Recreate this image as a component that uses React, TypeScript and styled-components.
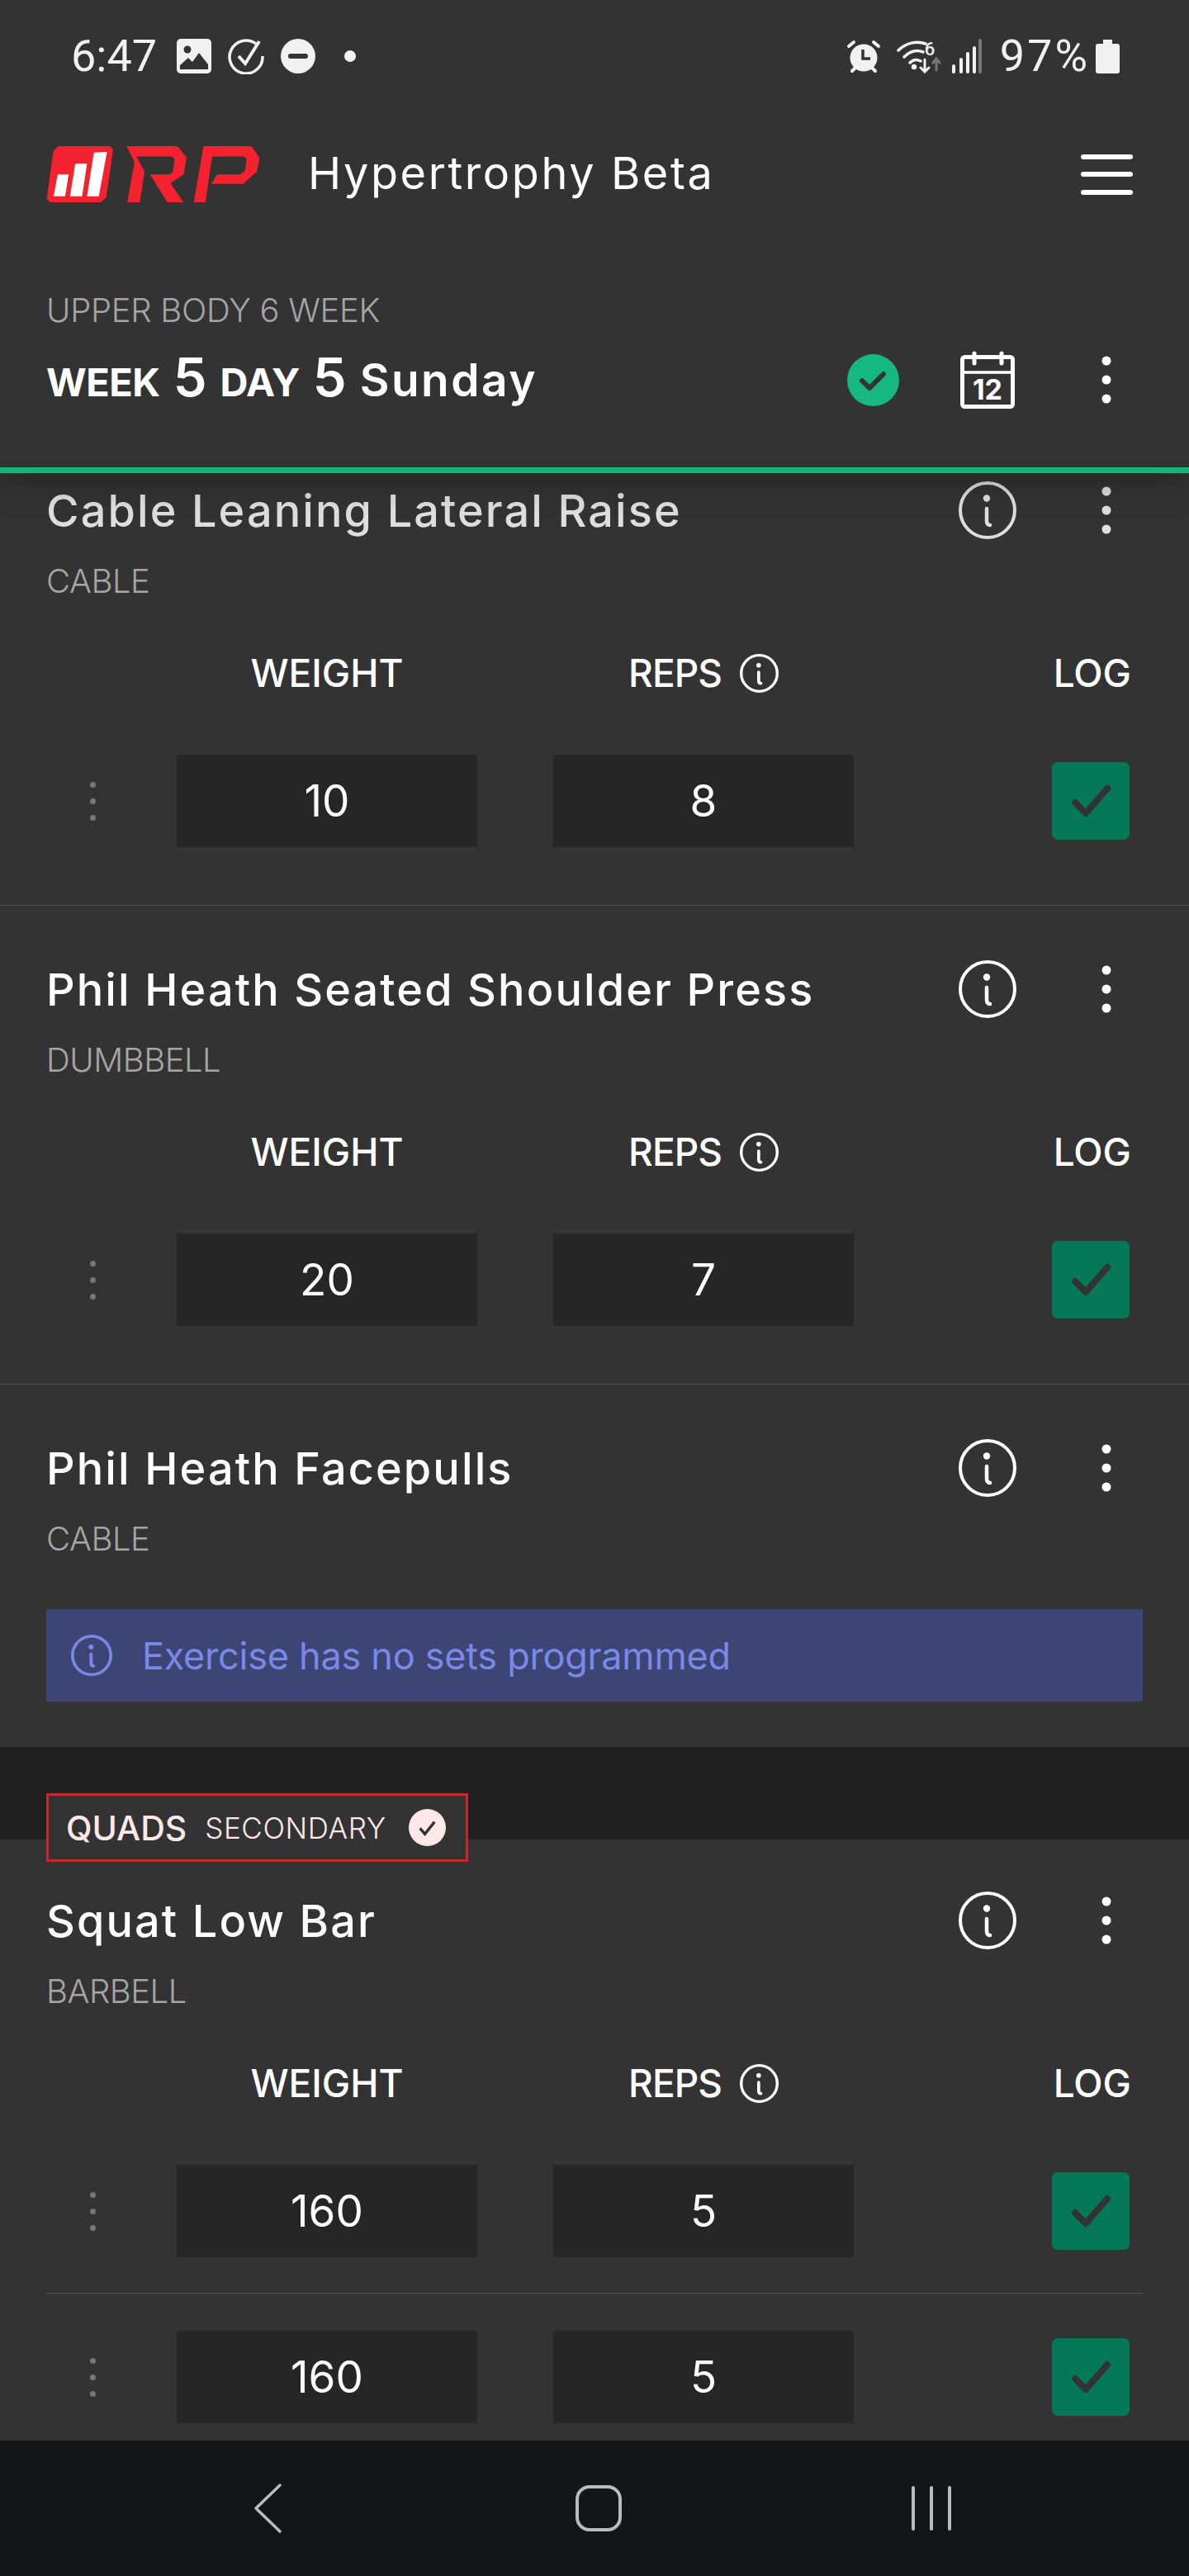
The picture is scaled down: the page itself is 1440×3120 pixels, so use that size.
import React from 'react'
import styled, {createGlobalStyle} from 'styled-components'

const FONT = `Inter, "Liberation Sans", sans-serif`

const Global = createGlobalStyle`
  html, body {
    margin: 0;
    padding: 0;
    background: #333;
  }
  * {
    box-sizing: border-box;
  }
`

const Screen = styled.div`
  width: 1440px;
  height: 3120px;
  display: flex;
  flex-direction: column;
  overflow: hidden;
  background: #333;
  color: #fff;
  font-family: ${FONT};
`

const Top = styled.header`
  position: relative;
  z-index: 2;
  height: 573px;
  flex: none;
  background: #333;
  border-bottom: 7px solid #18b27d;
  box-shadow: 0 10px 40px rgba(0, 0, 0, 0.3);
`

const StatusBar = styled.div`
  height: 136px;
  padding: 0 84px 0 86px;
  display: flex;
  align-items: center;
  justify-content: space-between;
  color: #f1f1f1;
  font-family: Roboto, sans-serif;
`

const StatusGroup = styled.div`
  display: flex;
  align-items: center;
`

const StatusSlot = styled.div<{$left: number}>`
  display: flex;
  margin-left: ${(p) => p.$left}px;
`

const StatusText = styled.span<{$spread?: number}>`
  font-size: 54px;
  line-height: 54px;
  letter-spacing: ${(p) => p.$spread ?? 0}px;
`

const AppBar = styled.div`
  height: 150px;
  padding: 0 68px 0 56px;
  display: flex;
  align-items: center;
`

const AppTitle = styled.div`
  flex: 1;
  margin: -4px 0 0 58px;
  font-size: 54px;
  letter-spacing: 2.600px;
  font-weight: 400;
`

const Burger = styled.div`
  width: 63px;
  display: flex;
  flex-direction: column;
  gap: 15.500px;
`

const BurgerLine = styled.span`
  height: 6px;
  border-radius: 3px;
  background: #fff;
`

const Program = styled.div`
  margin: 66px 56px 0;
  font-size: 40px;
  line-height: 48px;
  letter-spacing: -0.300px;
  color: #a5a5a5;
  font-weight: 300;
`

const DayBar = styled.div`
  margin-top: 25px;
  height: 70px;
  padding: 0 93px 0 56px;
  display: flex;
  align-items: center;
`

const DayTitle = styled.div`
  flex: 1;
  display: flex;
  align-items: baseline;
  gap: 16px;
  font-size: 55px;
  line-height: 70px;
  font-weight: 600;
  letter-spacing: 2.500px;
`

const DaySmall = styled.span`
  font-size: 47px;
  font-weight: 700;
  letter-spacing: -0.500px;
`

const DayNumber = styled.span`
  font-size: 65px;
  font-weight: 600;
  letter-spacing: 0;
`

const Spacer = styled.div<{$w: number}>`
  width: ${(p) => p.$w}px;
  flex: none;
`

const Scroll = styled.main`
  flex: 1;
  min-height: 0;
  overflow: hidden;
`

const Card = styled.section<{$first?: boolean; $last?: boolean}>`
  padding: ${(p) => (p.$first ? 10 : 66)}px 56px 0;
  border-bottom: ${(p) => (p.$last ? 'none' : '1px solid #4e4e4e')};
`

const TitleRow = styled.div`
  height: 70px;
  display: flex;
  align-items: center;
`

const ExerciseName = styled.h2<{$dim?: boolean}>`
  flex: 1;
  margin: 0;
  font-size: 54px;
  font-weight: 500;
  letter-spacing: 2.100px;
  color: ${(p) => (p.$dim ? '#dedede' : '#fff')};
`

const IconSlot = styled.div<{$w: number}>`
  width: ${(p) => p.$w}px;
  display: flex;
  justify-content: center;
  flex: none;
`

const Equipment = styled.div`
  margin-top: 31px;
  font-size: 40px;
  line-height: 40px;
  letter-spacing: -0.500px;
  font-weight: 300;
  color: #a5a5a5;
`

const SetGrid = styled.div`
  display: grid;
  grid-template-columns: 158px 364px 92px 364px 1fr;
  align-items: center;
`

const HeadRow = styled(SetGrid)`
  height: 48px;
  margin-top: 63px;
  font-size: 46px;
  font-weight: 500;
`

const Head = styled.div<{$col: number}>`
  grid-column: ${(p) => p.$col};
  display: flex;
  justify-content: center;
  align-items: center;
  gap: 22px;
  &:last-child {
    justify-content: flex-end;
    padding-right: 14px;
  }
`

const RepsLabel = styled.span`
  letter-spacing: -1px;
`

const SetRow = styled(SetGrid)<{$next?: boolean; $last?: boolean}>`
  padding-top: ${(p) => (p.$next ? 45 : 79)}px;
  padding-bottom: ${(p) => (p.$last ? 70 : 43)}px;
  border-top: ${(p) => (p.$next ? '1px solid #4e4e4e' : 'none')};
`

const Grip = styled.div`
  display: flex;
  flex-direction: column;
  align-items: center;
  gap: 13px;
  width: 112px;
`

const GripDot = styled.span`
  width: 7px;
  height: 7px;
  border-radius: 50%;
  background: #777;
`

const NumberBox = styled.div<{$col: number}>`
  grid-column: ${(p) => p.$col};
  height: 112px;
  display: flex;
  align-items: center;
  justify-content: center;
  background: #262626;
  font-size: 53px;
  font-weight: 400;
`

const LogBox = styled.div`
  grid-column: 5;
  justify-self: end;
  margin-right: 16px;
  width: 94px;
  height: 94px;
  border-radius: 7px;
  background: #047857;
  display: flex;
  align-items: center;
  justify-content: center;
`

const Alert = styled.div`
  margin: 65px 0 55px;
  height: 112px;
  padding: 0 30px;
  display: flex;
  align-items: center;
  gap: 36px;
  background: #3d4574;
  color: #7a88e8;
  font-size: 45px;
  font-weight: 400;
  letter-spacing: -0.250px;
`

const GroupBand = styled.div`
  height: 112px;
  padding-top: 56px;
  background: #212121;
`

const MuscleChip = styled.div`
  position: relative;
  z-index: 1;
  margin-left: 56px;
  width: 511px;
  height: 83px;
  border: 3px solid #c6282c;
  background: #333;
  display: flex;
  align-items: center;
  padding-left: 21px;
  color: #fde8e8;
`

const ChipMain = styled.span`
  font-size: 41px;
  font-weight: 500;
  margin-right: 22px;
`

const ChipSub = styled.span`
  font-size: 35px;
  font-weight: 300;
  letter-spacing: 0.600px;
  margin-right: 27px;
`

const LastCard = styled.section`
  padding: 63px 56px 0;
`

const NavBar = styled.nav`
  height: 164px;
  flex: none;
  background: #131519;
  padding-left: 307px;
  display: flex;
  align-items: center;
`

const NavItem = styled.div<{$left: number}>`
  display: flex;
  margin-left: ${(p) => p.$left}px;
`

function Info({size = 70, color = '#fff', stroke = 4}: {size?: number; color?: string; stroke?: number}) {
  return (
    <svg width={size} height={size} viewBox="0 0 70 70" fill="none">
      <circle cx="35" cy="35" r={35 - stroke / 2} stroke={color} strokeWidth={stroke} />
      <circle cx="34" cy="20.500" r="4.200" fill={color} />
      <path d="M34 33v15c0 3 1 5 4 5" stroke={color} strokeWidth={stroke + 0.5} strokeLinecap="round" />
    </svg>
  )
}

function Dots({color = '#fff'}: {color?: string}) {
  return (
    <svg width="14" height="60" viewBox="0 0 14 60" fill={color}>
      <circle cx="7" cy="7" r="5.500" />
      <circle cx="7" cy="30" r="5.500" />
      <circle cx="7" cy="53" r="5.500" />
    </svg>
  )
}

function Check() {
  return (
    <svg width="52" height="42" viewBox="0 0 52 42" fill="none">
      <path d="M7 23l13 13L46 6" stroke="#333" strokeWidth="8" strokeLinecap="round" strokeLinejoin="round" />
    </svg>
  )
}

function Logo() {
  return (
    <svg width="259" height="68" viewBox="18 27 777 205">
      <path d="M60 27H250L260 40L235 215L215 232H30L18 218L42 45Z" fill="#f4222f" />
      <path d="M58 130H98L85 210H43ZM122 91H165L147 210H103ZM190 50L238 48L208 210H165Z" fill="#fff" />
      <path
        d="M310 27H495L528 68L518 130L470 163L517 232H458L395 130H468L478 120L485 75L475 65H345L375 118L358 232H312L338 85Z"
        fill="#f4222f"
      />
      <path
        d="M590 27H765L795 70L785 120L735 165H618L640 130H725L742 115L748 75L738 65H622L597 232H555Z"
        fill="#f4222f"
      />
    </svg>
  )
}

function CalendarIcon() {
  return (
    <svg width="66" height="70" viewBox="0 0 66 70" fill="none" stroke="#fff">
      <rect x="2.500" y="7.500" width="61" height="60" rx="3" strokeWidth="5" />
      <path d="M3 26h60" strokeWidth="3.500" />
      <path d="M17 3v12M50 3v12" strokeWidth="5" strokeLinecap="round" />
      <text x="33" y="59" fontFamily="Inter, sans-serif" fontWeight="700" fontSize="34" textAnchor="middle" fill="#fff" stroke="none">
        12
      </text>
    </svg>
  )
}

function StatusIcons() {
  return (
    <>
      <StatusSlot $left={24}>
        <svg width="42" height="42" viewBox="0 0 42 42">
          <rect width="42" height="42" rx="5" fill="#f1f1f1" />
          <circle cx="13" cy="13" r="4.500" fill="#333" />
          <path d="M4 37V32l10-9 5 5 8-11 11 14v6z" fill="#333" />
        </svg>
      </StatusSlot>
      <StatusSlot $left={20}>
        <svg width="46" height="44" viewBox="0 0 46 44" fill="none" stroke="#f1f1f1" strokeWidth="3.500">
          <path d="M34 7A20 20 0 1 0 42 22" />
          <path d="M13 22l8 9L38 4" strokeWidth="4" />
        </svg>
      </StatusSlot>
      <StatusSlot $left={18}>
        <svg width="42" height="42" viewBox="0 0 42 42">
          <circle cx="21" cy="21" r="21" fill="#f1f1f1" />
          <rect x="9" y="18" width="24" height="6" rx="3" fill="#333" />
        </svg>
      </StatusSlot>
      <StatusSlot $left={35}>
        <svg width="14" height="14" viewBox="0 0 14 14">
          <circle cx="7" cy="7" r="7" fill="#f1f1f1" />
        </svg>
      </StatusSlot>
    </>
  )
}

function SystemIcons() {
  return (
    <>
      <svg width="42" height="42" viewBox="0 0 42 42">
        <circle cx="21" cy="23" r="16.500" fill="#f1f1f1" />
        <path d="M20 13v11h9" stroke="#333" strokeWidth="3.500" fill="none" />
        <path d="M3 9l6-5M39 9l-6-5M7 39l4-4M35 39l-4-4" stroke="#f1f1f1" strokeWidth="4" strokeLinecap="round" />
      </svg>
      <StatusSlot $left={19}>
        <svg width="54" height="42" viewBox="0 0 54 42" fill="none" stroke="#f1f1f1" strokeWidth="3.500" strokeLinecap="round">
          <path d="M2 14C11 5 24 2 35 6M9 22c7-7 15-9 23-6M16 29c4-4 9-4 13-2" />
          <circle cx="21" cy="34" r="1.500" fill="#f1f1f1" />
          <path d="M34 25v15M29 35l5 5 5-5" strokeWidth="3" />
          <path d="M48 38V25M44 29l4-5 4 5" stroke="#777" strokeWidth="3" />
          <text x="40" y="20" fontFamily="Roboto, sans-serif" fontSize="22" fontWeight="500" fill="#f1f1f1" stroke="none" textAnchor="middle">
            6
          </text>
        </svg>
      </StatusSlot>
      <StatusSlot $left={13}>
        <svg width="36" height="42" viewBox="0 0 36 42" fill="none" strokeWidth="4" strokeLinecap="round">
          <path d="M2 40v-7M11 40V25M19 40V18M27 40V11" stroke="#f1f1f1" />
          <path d="M34 40V2" stroke="#777" />
        </svg>
      </StatusSlot>
      <StatusSlot $left={22}>
        <StatusText $spread={3}>97%</StatusText>
      </StatusSlot>
      <StatusSlot $left={7}>
        <svg width="29" height="41" viewBox="0 0 29 41">
          <path d="M9 0h11v5h6q3 0 3 3v30q0 3-3 3H3q-3 0-3-3V8q0-3 3-3h6z" fill="#f1f1f1" />
        </svg>
      </StatusSlot>
    </>
  )
}

function Sets({rows}: {rows: [string, string][]}) {
  return (
    <>
      {rows.map(([weight, reps], i) => (
        <SetRow key={i} $next={i > 0} $last={i === rows.length - 1}>
          <Grip>
            <GripDot />
            <GripDot />
            <GripDot />
          </Grip>
          <NumberBox $col={2}>{weight}</NumberBox>
          <NumberBox $col={4}>{reps}</NumberBox>
          <LogBox>
            <Check />
          </LogBox>
        </SetRow>
      ))}
    </>
  )
}

function ExerciseHead({name, equipment, dim}: {name: string; equipment: string; dim?: boolean}) {
  const tone = dim ? '#dedede' : '#fff'
  return (
    <>
      <TitleRow>
        <ExerciseName $dim={dim}>{name}</ExerciseName>
        <IconSlot $w={70}>
          <Info color={tone} />
        </IconSlot>
        <Spacer $w={102} />
        <IconSlot $w={14}>
          <Dots color={tone} />
        </IconSlot>
        <Spacer $w={37} />
      </TitleRow>
      <Equipment>{equipment}</Equipment>
    </>
  )
}

function TableHead() {
  return (
    <HeadRow>
      <Head $col={2}>WEIGHT</Head>
      <Head $col={4}>
        <RepsLabel>REPS</RepsLabel>
        <Info size={47} stroke={5} />
      </Head>
      <Head $col={5}>LOG</Head>
    </HeadRow>
  )
}

export default function App() {
  return (
    <Screen>
      <Global />
      <Top>
        <StatusBar>
          <StatusGroup>
            <StatusText>6:47</StatusText>
            <StatusIcons />
          </StatusGroup>
          <StatusGroup>
            <SystemIcons />
          </StatusGroup>
        </StatusBar>
        <AppBar>
          <Logo />
          <AppTitle>Hypertrophy Beta</AppTitle>
          <Burger>
            <BurgerLine />
            <BurgerLine />
            <BurgerLine />
          </Burger>
        </AppBar>
        <Program>UPPER BODY 6 WEEK</Program>
        <DayBar>
          <DayTitle>
            <DaySmall>WEEK</DaySmall>
            <DayNumber>5</DayNumber>
            <DaySmall>DAY</DaySmall>
            <DayNumber>5</DayNumber>
            <span>Sunday</span>
          </DayTitle>
          <svg width="63" height="63" viewBox="0 0 63 63">
            <circle cx="31.500" cy="31.500" r="31.500" fill="#16b882" />
            <path d="M18 32l9 9 17-17" stroke="#333" strokeWidth="6" fill="none" strokeLinecap="round" strokeLinejoin="round" />
          </svg>
          <Spacer $w={74} />
          <CalendarIcon />
          <Spacer $w={104} />
          <Dots />
        </DayBar>
      </Top>
      <Scroll>
        <Card $first>
          <ExerciseHead name="Cable Leaning Lateral Raise" equipment="CABLE" dim />
          <TableHead />
          <Sets rows={[['10', '8']]} />
        </Card>
        <Card>
          <ExerciseHead name="Phil Heath Seated Shoulder Press" equipment="DUMBBELL" />
          <TableHead />
          <Sets rows={[['20', '7']]} />
        </Card>
        <Card $last>
          <ExerciseHead name="Phil Heath Facepulls" equipment="CABLE" />
          <Alert>
            <Info size={50} color="#7a88e8" stroke={5} />
            Exercise has no sets programmed
          </Alert>
        </Card>
        <GroupBand>
          <MuscleChip>
            <ChipMain>QUADS</ChipMain>
            <ChipSub>SECONDARY</ChipSub>
            <svg width="45" height="45" viewBox="0 0 46 46">
              <circle cx="23" cy="23" r="23" fill="#fde8e8" />
              <path d="M14 24l6 7 12-15" stroke="#333" strokeWidth="3.500" fill="none" />
            </svg>
          </MuscleChip>
        </GroupBand>
        <LastCard>
          <ExerciseHead name="Squat Low Bar" equipment="BARBELL" />
          <TableHead />
          <Sets
            rows={[
              ['160', '5'],
              ['160', '5'],
            ]}
          />
        </LastCard>
      </Scroll>
      <NavBar>
        <NavItem $left={0}>
          <svg width="34" height="60" viewBox="0 0 34 60" fill="none" stroke="#bbb" strokeWidth="3.500" strokeLinecap="round" strokeLinejoin="round">
            <path d="M32 2L3 30l29 28" />
          </svg>
        </NavItem>
        <NavItem $left={356}>
          <svg width="56" height="56" viewBox="0 0 56 56" fill="none" stroke="#bbb" strokeWidth="4">
            <rect x="2" y="2" width="52" height="52" rx="15" />
          </svg>
        </NavItem>
        <NavItem $left={350}>
          <svg width="50" height="54" viewBox="0 0 50 54" fill="none" stroke="#bbb" strokeWidth="4" strokeLinecap="round">
            <path d="M3 2v50M25 2v50M47 2v50" />
          </svg>
        </NavItem>
      </NavBar>
    </Screen>
  )
}
